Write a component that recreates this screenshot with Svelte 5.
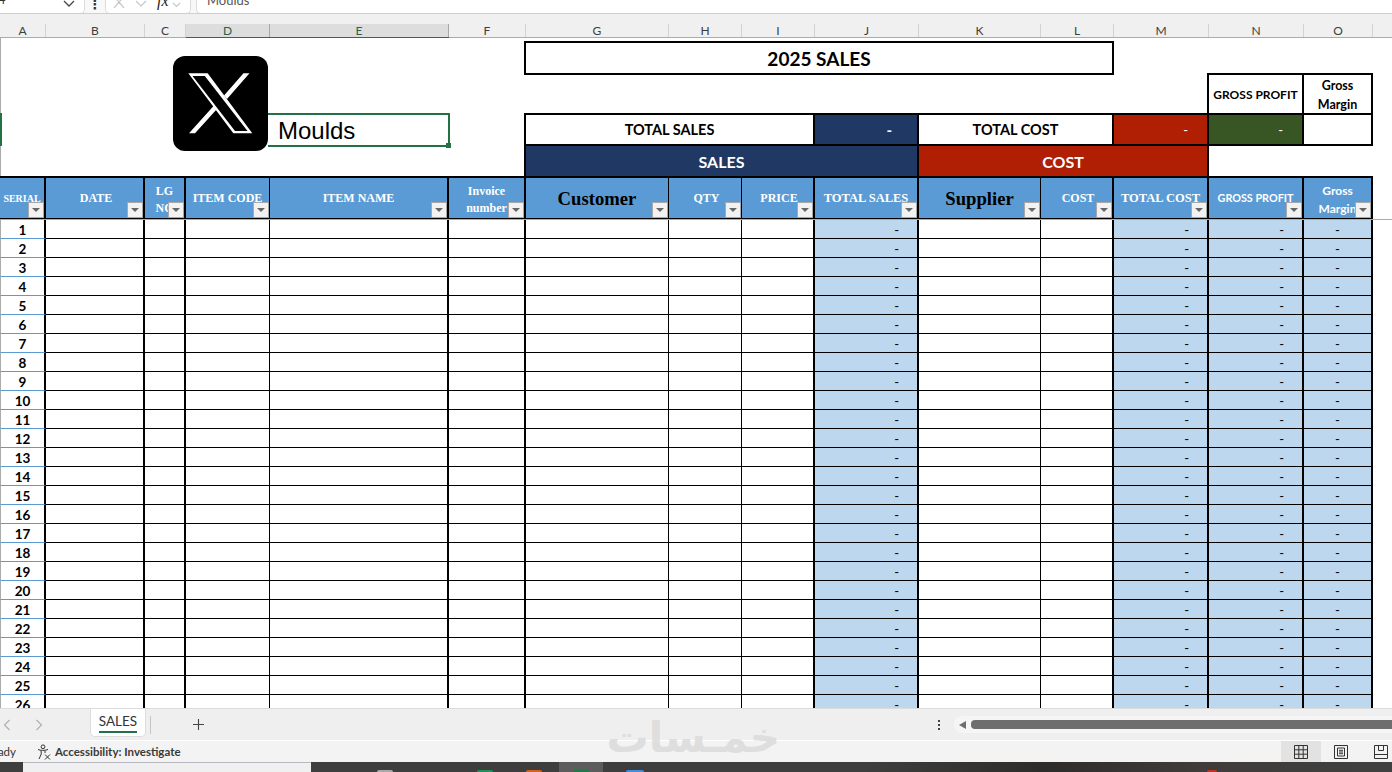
<script>
  const columns = [
    { id: 'A', title: 'SERIAL', kind: 'small' },
    { id: 'B', title: 'DATE', kind: 'nudge' },
    { id: 'C', title: 'LG\nNO', kind: 'two' },
    { id: 'D', title: 'ITEM CODE', thin: true, selected: true },
    { id: 'E', title: 'ITEM NAME', selected: true },
    { id: 'F', title: 'Invoice\nnumber', kind: 'two' },
    { id: 'G', title: 'Customer', kind: 'big', thin: true },
    { id: 'H', title: 'QTY', kind: 'nudge', thin: true },
    { id: 'I', title: 'PRICE', kind: 'nudge' },
    { id: 'J', title: 'TOTAL SALES', kind: 'wide', value: 'right' },
    { id: 'K', title: 'Supplier', kind: 'big', thin: true },
    { id: 'L', title: 'COST', kind: 'nudge' },
    { id: 'M', title: 'TOTAL COST', kind: 'wide', value: 'right' },
    { id: 'N', title: 'GROSS PROFIT', kind: 'sans', value: 'right' },
    { id: 'O', title: 'Gross\nMargin', kind: 'sans tall two', value: 'center' }
  ];

  const rows = Array.from({ length: 26 }, (_, i) => i + 1);
</script>

<div class="window">
  <div class="formula-bar">
    <div class="name-box"><span class="ref">4</span><svg class="chev" width="12" height="7" viewBox="0 0 12 7"><path d="M1 1l5 5 5-5" /></svg></div>
    <div class="kebab">⋮</div>
    <div class="fx-box">
      <svg class="mark" width="12" height="8" viewBox="0 0 12 8"><path d="M1 8l5-6 5 6M1 -3l5 5 5-5" /></svg>
      <svg class="mark" width="12" height="8" viewBox="0 0 12 8"><path d="M1 1l5 5 5-5" /></svg>
      <span class="fx">fx</span>
      <svg class="mark small" width="9" height="6" viewBox="0 0 9 6"><path d="M1 1l3.500 3.500 3.500-3.500" /></svg>
    </div>
    <div class="input-box"><span>Moulds</span></div>
  </div>

  <div class="col-heads">
    {#each columns as col}
      <div class="col-head" class:selected={col.selected}>{col.id}</div>
    {/each}
  </div>

  <div class="sheet">
    <div class="top">
      <div class="edge edge-top"></div>
      <div class="edge edge-active"></div>
      <div class="edge edge-low"></div>

      <div class="box title">2025 SALES</div>
      <div class="box gp-label gross-head">GROSS PROFIT</div>
      <div class="box gm-label gross-head">Gross<br />Margin</div>

      <div class="moulds">Moulds<span class="handle"></span></div>

      <div class="box total-sales">TOTAL SALES</div>
      <div class="sum sum-sales">-</div>
      <div class="sum sum-cost-label">TOTAL COST</div>
      <div class="sum sum-cost">-</div>
      <div class="sum sum-profit">-</div>
      <div class="sum sum-margin"></div>

      <div class="band band-sales">SALES</div>
      <div class="band band-cost">COST</div>

      {#each columns as col}
        <div class="head {col.kind || ''}" class:thin={col.thin}>
          <span>{col.title}</span>
          <span class="filter"><i></i></span>
        </div>
      {/each}
    </div>

    <div class="body">
      {#each rows as row}
        {#each columns as col, c}
          <div class="cell {col.value || ''}" class:thin={col.thin} class:serial={c === 0}>
            {#if c === 0}{row}{:else if col.value}-{/if}
          </div>
        {/each}
        <div class="rest"></div>
      {/each}
    </div>

    <svg class="logo" viewBox="0 0 95 95" width="95" height="95">
      <rect width="95" height="95" rx="12" />
      <path fill-rule="evenodd" d="M15.300 17.300H34.700L79.300 77.300H60.300ZM19.500 20L62 75H74.500L31.800 20Z" />
      <path d="M70.500 17.300H76.500L54 43 51 39.500ZM16 77.300H22L44 53 41 49.500Z" />
    </svg>
  </div>

  <div class="tabs">
    <svg class="arrow first" width="8" height="12" viewBox="0 0 8 12"><path d="M6.500 1L1.500 6l5 5" /></svg>
    <svg class="arrow second" width="8" height="12" viewBox="0 0 8 12"><path d="M1.500 1l5 5-5 5" /></svg>
    <div class="tab"><span>SALES</span></div>
    <div class="tab-sep"></div>
    <svg class="plus" width="13" height="13" viewBox="0 0 13 13"><path d="M6.500 1v11M1 6.500h11" /></svg>
    <div class="dots"><i></i><i></i><i></i></div>
    <div class="scroll">
      <span class="scroll-left"></span>
      <span class="thumb"></span>
    </div>
  </div>

  <div class="status">
    <span class="ready">Ready</span>
    <svg class="access" width="15" height="16" viewBox="0 0 15 16">
      <circle cx="6" cy="2.800" r="1.900" />
      <path d="M1 5.500c3 1.200 6.500 1.200 10 0M4 6.500l.3 3.500L2 15M8 6.500v2.500M8 10.500l5 5M13 10.500l-5 5" />
    </svg>
    <span class="access-text">Accessibility: Investigate</span>
    <div class="views">
      <div class="view active">
        <svg width="14" height="14" viewBox="0 0 14 14"><path d="M.5.500h13v13H.5zM.5 4.800h13M.5 9.200h13M4.800.500v13M9.200.500v13" /></svg>
      </div>
      <div class="view">
        <svg width="14" height="14" viewBox="0 0 14 14"><path d="M.5.500h13v13H.5zM3.500 3h7v8h-7zM5 5.300h4M5 7h4M5 8.700h4" /></svg>
      </div>
      <div class="view">
        <svg width="14" height="14" viewBox="0 0 14 14"><path d="M.5.500h13v13H.5zM.5 9.500h13M4.500.500v5h5v-5" /></svg>
      </div>
    </div>
  </div>

  <div class="taskbar">
    <div class="search"></div>
    <i class="app grey"></i>
    <i class="app green"></i>
    <i class="app orange"></i>
    <div class="running"><i class="app excel"></i></div>
    <i class="app blue"></i>
    <i class="app red"></i>
  </div>

  <div class="watermark">خمـسات</div>
</div>

<style>
  :global(body) {
    margin: 0;
    background: #fff;
  }

  .window {
    --cols: 46px 99px 41px 84px 179px 77px 143px 73px 73px 104px 122px 73px 95px 95px 69px 19px;
    position: relative;
    width: 1392px;
    height: 772px;
    overflow: hidden;
    font-family: Lato, "Liberation Sans", sans-serif;
    color: #000;
  }

  /* formula bar, only its lower edge is on screen */
  .formula-bar {
    display: flex;
    height: 14px;
    box-sizing: border-box;
    border-bottom: 1px solid #cfcfcf;
    background: #f8f8f8;
    overflow: hidden;
  }

  .name-box,
  .fx-box,
  .input-box {
    display: flex;
    align-items: flex-end;
    box-sizing: border-box;
    height: 14px;
    background: #fff;
    border: 1px solid #dcdcdc;
    border-top: none;
    border-radius: 0 0 5px 5px;
  }

  .name-box {
    width: 85px;
    border-left: none;
    border-radius: 0 0 5px 0;
  }

  .ref {
    font-size: 13px;
    line-height: 13px;
    margin-bottom: 7px;
    margin-left: -2px;
    color: #333;
  }

  .chev {
    margin: 0 9px 6px auto;
    fill: none;
    stroke: #444;
    stroke-width: 1.300;
  }

  .kebab {
    width: 20px;
    text-align: center;
    font: bold 13px/10px "DejaVu Sans", sans-serif;
    color: #333;
  }

  .fx-box {
    width: 86px;
    padding: 0 0 5px 7px;
    gap: 10px;
  }

  .mark {
    fill: none;
    stroke: #c8c8c8;
    stroke-width: 1.200;
  }

  .mark.small {
    margin-left: -7px;
  }

  .fx {
    font: italic 16px/16px "Liberation Serif", serif;
    color: #222;
    margin-bottom: -1px;
  }

  .input-box {
    flex: 1;
    margin-left: 5px;
    border-right: none;
    border-radius: 0 0 0 5px;
    padding-left: 10px;
    font-size: 13px;
    color: #555;
  }

  .input-box span {
    line-height: 13px;
    margin-bottom: 6px;
  }

  /* column letters */
  .col-heads {
    display: grid;
    grid-template-columns: var(--cols);
    height: 24px;
    box-sizing: border-box;
    background: #f0f0f0;
    border-bottom: 1px solid #ababab;
  }

  .col-head {
    margin-top: 10px;
    font-size: 12px;
    line-height: 13px;
    text-align: center;
    color: #3d3d3d;
    border-right: 1px solid #d2d2d2;
    box-sizing: border-box;
  }

  .col-head.selected {
    background: #dddddd;
    color: #27634a;
    box-shadow: 0 2px 0 #217346;
    border-right-color: #a8a8a8;
  }

  /* grid, same columns as the letters above */
  .sheet {
    position: relative;
    height: 670px;
    overflow: hidden;
    background: #fff;
  }

  .top {
    display: grid;
    grid-template-columns: var(--cols);
    grid-template-rows: 3px 34px 38px 33px 30px 43px;
  }

  .body {
    display: grid;
    grid-template-columns: var(--cols);
    grid-auto-rows: 19px;
    border-top: 1px solid #ababab;
  }

  .edge {
    grid-column: 1;
    border-left: 1px solid #ababab;
  }

  .edge-top {
    grid-row: 1 / 4;
  }

  .edge-active {
    grid-row: 4;
    border-left: 2px solid #217346;
  }

  .edge-low {
    grid-row: 5;
  }

  .box {
    display: flex;
    align-items: center;
    justify-content: center;
    box-sizing: border-box;
    border: 2px solid #000;
    font-weight: 700;
  }

  .title {
    grid-column: 7 / 13;
    grid-row: 2;
    margin-left: -2px;
    font-size: 19px;
  }

  .gross-head {
    grid-row: 3;
    margin: -2px 0 0 -2px;
    border-bottom: none;
    font-size: 12px;
    line-height: 19px;
    text-align: center;
  }

  .gp-label {
    grid-column: 14;
  }

  .gm-label {
    grid-column: 15;
    font-size: 12.500px;
    padding-top: 2px;
  }

  .moulds {
    position: relative;
    grid-column: 5;
    grid-row: 4;
    margin: 0 -1px 0 -2px;
    height: 34px;
    box-sizing: border-box;
    border: 2px solid #217346;
    border-left: none;
    padding-left: 10px;
    font: 24px/32px "Liberation Sans", sans-serif;
    color: #000;
  }

  .handle {
    position: absolute;
    right: -3px;
    bottom: -3px;
    width: 5px;
    height: 5px;
    background: #217346;
  }

  .total-sales {
    grid-column: 7 / 10;
    grid-row: 4;
    margin-left: -2px;
    font-size: 14.500px;
  }

  .sum {
    grid-row: 4;
    display: flex;
    align-items: center;
    box-sizing: border-box;
    border: 2px solid #000;
    border-left: none;
    font-size: 14.500px;
  }

  .sum-sales {
    grid-column: 10;
    background: #203864;
    color: #fff;
    font-weight: 700;
    font-size: 15px;
    justify-content: flex-end;
    padding-right: 25px;
  }

  .sum-cost-label {
    grid-column: 11 / 13;
    justify-content: center;
    font-weight: 700;
  }

  .sum-cost {
    grid-column: 13;
    background: #b01e03;
    color: #fff;
    font-size: 13px;
    justify-content: flex-end;
    padding-right: 19px;
  }

  .sum-profit {
    grid-column: 14;
    background: #375623;
    color: #fff;
    font-size: 13px;
    justify-content: flex-end;
    padding-right: 19px;
  }

  .sum-margin {
    grid-column: 15;
  }

  .band {
    grid-row: 5;
    display: flex;
    align-items: center;
    justify-content: center;
    box-sizing: border-box;
    border-right: 2px solid #000;
    color: #fff;
    font-weight: 700;
    font-size: 16px;
  }

  .band-sales {
    grid-column: 7 / 11;
    margin-left: -2px;
    background: #203864;
    border-left: 2px solid #000;
  }

  .band-cost {
    grid-column: 11 / 14;
    background: #b01e03;
  }

  /* table header */
  .head {
    position: relative;
    grid-row: 6;
    display: flex;
    align-items: center;
    justify-content: center;
    box-sizing: border-box;
    background: #5b9bd5;
    border-top: 2px solid #000;
    border-right: 2px solid #000;
    border-bottom: 1px solid #000;
    overflow: hidden;
    color: #fff;
    font: 700 12px/17px "Liberation Serif", serif;
    text-align: center;
  }

  .head.thin {
    border-right-width: 1px;
  }

  .head span:first-child {
    white-space: pre;
    flex: none;
  }

  .head.small {
    font-size: 10px;
  }

  .head.nudge {
    padding-left: 3px;
  }

  .head.two {
    padding-top: 3px;
  }

  .head.wide {
    font-size: 12.500px;
  }

  .head.big {
    color: #000;
    font-size: 18.670px;
  }

  .head.sans {
    font-family: Lato, sans-serif;
    font-size: 10.800px;
    line-height: 18px;
  }

  .head.tall {
    font-size: 12px;
  }

  .filter {
    position: absolute;
    right: 0;
    bottom: 0;
    width: 16px;
    height: 16px;
    box-sizing: border-box;
    background: #f2f2f2;
    border: 1px solid #a8a8a8;
  }

  .filter i {
    position: absolute;
    left: 3px;
    top: 5px;
    border-left: 4px solid transparent;
    border-right: 4px solid transparent;
    border-top: 4px solid #666;
  }

  /* table body */
  .cell {
    box-sizing: border-box;
    border-right: 2px solid #000;
    border-bottom: 1px solid #000;
    font-size: 13px;
    line-height: 20px;
    font-weight: 700;
  }

  .cell.thin {
    border-right-width: 1px;
  }

  .cell.serial {
    border-left: 1px solid #ababab;
    border-bottom-color: #5b9bd5;
    text-align: center;
    font-size: 13.500px;
  }

  .cell.right,
  .cell.center {
    background: #bdd7ee;
    font-weight: 400;
  }

  .cell.right {
    text-align: right;
    padding-right: 18px;
  }

  .cell.center {
    text-align: center;
  }

  .logo {
    position: absolute;
    left: 173px;
    top: 18px;
    fill: #fff;
  }

  .logo rect {
    fill: #000;
  }

  /* sheet tabs */
  .tabs {
    display: flex;
    align-items: center;
    height: 32px;
    box-sizing: border-box;
    background: #efefef;
    border-top: 1px solid #dcdcdc;
  }

  .arrow {
    fill: none;
    stroke: #b0b0b0;
    stroke-width: 1.200;
  }

  .arrow.first {
    margin-left: 3px;
  }

  .arrow.second {
    margin-left: 24px;
  }

  .tab {
    align-self: flex-start;
    box-sizing: border-box;
    width: 56px;
    height: 28px;
    margin-left: 47px;
    background: #fff;
    border: 1px solid #dddddd;
    border-top: none;
    border-radius: 0 0 5px 5px;
    text-align: center;
    font-size: 13.500px;
    line-height: 25px;
    color: #333;
  }

  .tab span {
    display: inline-block;
    height: 22px;
    border-bottom: 2px solid #217346;
  }

  .tab-sep {
    width: 1px;
    height: 18px;
    margin-left: 4px;
    background: #c4c4c4;
  }

  .plus {
    margin-left: 41px;
    fill: none;
    stroke: #444;
    stroke-width: 1.100;
  }

  .dots {
    display: flex;
    flex-direction: column;
    gap: 2px;
    margin-left: 733px;
  }

  .dots i {
    display: block;
    width: 2px;
    height: 2px;
    background: #444;
  }

  .scroll {
    display: flex;
    align-items: center;
    flex: 1;
    height: 17px;
    margin-left: 14px;
    padding-left: 5px;
    background: #f5f5f5;
    border-radius: 8px 0 0 8px;
  }

  .scroll-left {
    border-top: 4.500px solid transparent;
    border-bottom: 4.500px solid transparent;
    border-right: 7px solid #6e6e6e;
  }

  .thumb {
    flex: 1;
    height: 9px;
    margin-left: 5px;
    background: #6e6e6e;
    border-radius: 4px 0 0 4px;
  }

  /* status bar */
  .status {
    display: flex;
    align-items: center;
    height: 22px;
    box-sizing: border-box;
    background: #f3f3f3;
    border-top: 1px solid #fff;
    font-size: 11.500px;
    color: #333;
  }

  .ready {
    margin-left: -15px;
    width: 31px;
    flex: none;
  }

  .access {
    margin-left: 21px;
    flex: none;
    fill: none;
    stroke: #333;
    stroke-width: 1;
  }

  .access-text {
    margin-left: 3px;
    font-weight: 700;
    color: #3a3a3a;
  }

  .views {
    display: flex;
    align-self: stretch;
    margin-left: auto;
    margin-right: -9px;
  }

  .view {
    display: flex;
    align-items: center;
    justify-content: center;
    width: 40px;
    fill: none;
    stroke: #333;
    stroke-width: 1;
  }

  .view.active {
    background: #e2e2e2;
  }

  /* bottom edge of the taskbar */
  .taskbar {
    display: flex;
    align-items: flex-end;
    height: 10px;
    background: linear-gradient(90deg, #3e3e3e 0, #3e3e3e 62%, #2e2c2a 75%, #3f3c3a 86%, #404040 100%);
  }

  .search {
    width: 288px;
    height: 10px;
    margin-left: 23px;
    box-sizing: border-box;
    background: #f0f0f0;
    border-top: 1px solid #b9b9c4;
  }

  .app {
    display: block;
    width: 16px;
    height: 2px;
    border-radius: 4px 4px 0 0;
  }

  .grey {
    margin-left: 66px;
    background: #a9a9a9;
  }

  .green {
    margin-left: 84px;
    background: #1f8f5a;
  }

  .orange {
    margin-left: 33px;
    background: #d9601a;
  }

  .running {
    display: flex;
    align-items: flex-end;
    justify-content: center;
    width: 44px;
    height: 10px;
    margin-left: 17px;
    background: #5c5c5c;
  }

  .excel {
    background: #1d7a46;
  }

  .blue {
    margin-left: 23px;
    width: 18px;
    background: #3c8ee0;
  }

  .red {
    margin-left: 563px;
    width: 10px;
    background: #c8341a;
  }

  .watermark {
    position: absolute;
    left: 612px;
    top: 708px;
    width: 168px;
    height: 60px;
    direction: rtl;
    text-align: center;
    white-space: nowrap;
    font: 700 42px/60px "DejaVu Sans", sans-serif;
    color: #dedede;
  }
</style>
